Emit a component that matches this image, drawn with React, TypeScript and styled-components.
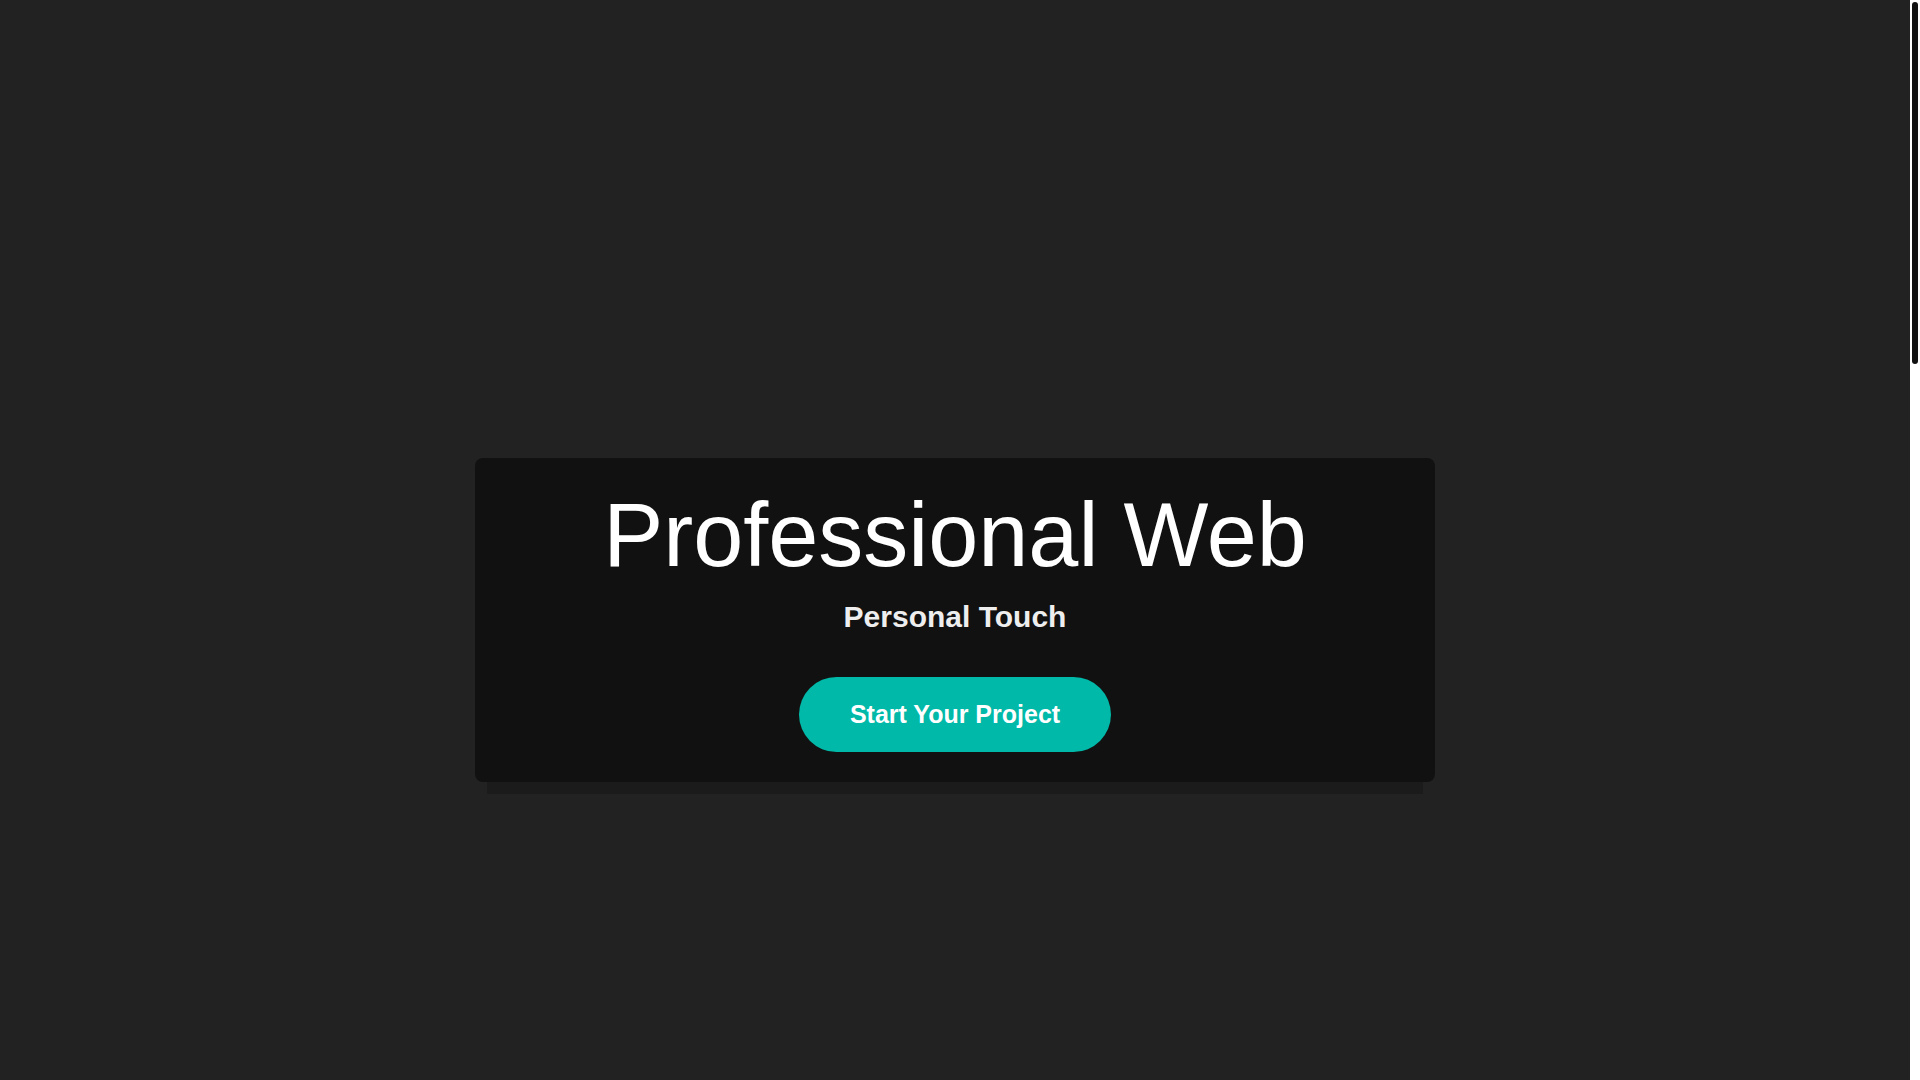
import React from 'react';
import styled, { createGlobalStyle } from 'styled-components';

const GlobalStyle = createGlobalStyle`
  html, body {
    margin: 0;
    padding: 0;
    height: 100%;
    overflow: hidden;
    background: #222222;
    font-family: "Liberation Sans", Arial, sans-serif;
  }
`;

const App = () => {
  return (
    <>
      <GlobalStyle />
      <Page>
        <Hero>
          <Card>
            <Title>Professional Web</Title>
            <Subtitle>Personal Touch</Subtitle>
            <CtaButton type="button">Start Your Project</CtaButton>
          </Card>
        </Hero>
        <Rest />
      </Page>
      <ScrollRail>
        <ScrollThumb />
      </ScrollRail>
    </>
  );
};

const Page = styled.div`
  height: 100vh;
  box-sizing: border-box;
  padding-right: 10px;
  overflow-y: scroll;
  background: #222222;
`;

const Hero = styled.section`
  height: 100vh;
  box-sizing: border-box;
  padding-top: 160px;
  display: flex;
  align-items: center;
  justify-content: center;
`;

const Card = styled.div`
  position: relative;
  width: 960px;
  box-sizing: border-box;
  padding: 25px 40px 30px;
  background: #111111;
  border-radius: 8px;
  display: flex;
  flex-direction: column;
  align-items: center;

  &::after {
    content: '';
    position: absolute;
    left: 12px;
    right: 12px;
    bottom: -12px;
    height: 12px;
    background: #1b1b1b;
  }
`;

const Title = styled.h1`
  margin: 0 0 12px;
  font-size: 90px;
  font-weight: 400;
  line-height: 1.17;
  color: #ffffff;
  text-align: center;
`;

const Subtitle = styled.p`
  margin: 0 0 43px;
  font-size: 30px;
  font-weight: 700;
  line-height: 1.15;
  color: #eeeeee;
`;

const CtaButton = styled.button`
  height: 75px;
  padding: 0 51px;
  border: none;
  border-radius: 38px;
  background: #00b9a8;
  color: #ffffff;
  font-family: "Liberation Sans", Arial, sans-serif;
  font-size: 25px;
  font-weight: 700;
  cursor: pointer;
`;

const Rest = styled.section`
  height: 2107px;
`;

const ScrollRail = styled.div`
  position: fixed;
  top: 0;
  right: 0;
  width: 10px;
  height: 100vh;
  background: #ffffff;
`;

const ScrollThumb = styled.div`
  margin: 2px 2px 0;
  height: 362px;
  background: #111111;
  border-radius: 3px;
`;

export default App;
